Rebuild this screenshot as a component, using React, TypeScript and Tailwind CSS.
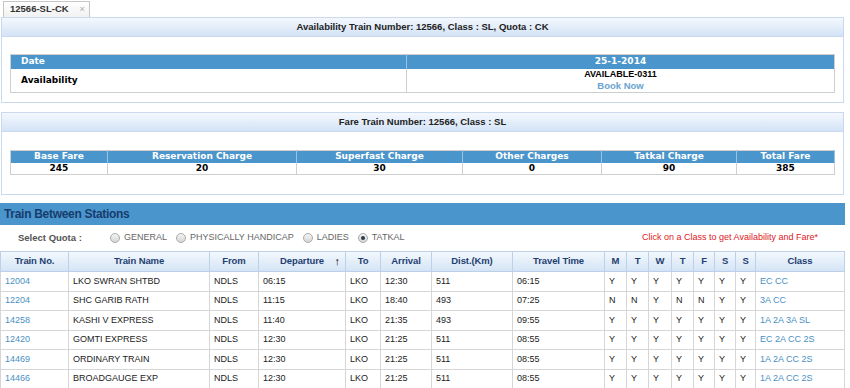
import React from 'react';

const trains = [
  { no: '12004', name: 'LKO SWRAN SHTBD', from: 'NDLS', dep: '06:15', to: 'LKO', arr: '12:30', dist: '511', time: '06:15', days: 'YYYYYYY', cls: 'EC CC' },
  { no: '12204', name: 'SHC GARIB RATH', from: 'NDLS', dep: '11:15', to: 'LKO', arr: '18:40', dist: '493', time: '07:25', days: 'NNYNNYY', cls: '3A CC' },
  { no: '14258', name: 'KASHI V EXPRESS', from: 'NDLS', dep: '11:40', to: 'LKO', arr: '21:35', dist: '493', time: '09:55', days: 'YYYYYYY', cls: '1A 2A 3A SL' },
  { no: '12420', name: 'GOMTI EXPRESS', from: 'NDLS', dep: '12:30', to: 'LKO', arr: '21:25', dist: '511', time: '08:55', days: 'YYYYYYY', cls: 'EC 2A CC 2S' },
  { no: '14469', name: 'ORDINARY TRAIN', from: 'NDLS', dep: '12:30', to: 'LKO', arr: '21:25', dist: '511', time: '08:55', days: 'YYYYYYY', cls: '1A 2A CC 2S' },
  { no: '14466', name: 'BROADGAUGE EXP', from: 'NDLS', dep: '12:30', to: 'LKO', arr: '21:25', dist: '511', time: '08:55', days: 'YYYYYYY', cls: '1A 2A CC 2S' },
];

const fares = [
  { label: 'Base Fare', value: '245', w: 'w-[97px]' },
  { label: 'Reservation Charge', value: '20', w: 'w-[189px]' },
  { label: 'Superfast Charge', value: '30', w: 'w-[166px]' },
  { label: 'Other Charges', value: '0', w: 'w-[139px]' },
  { label: 'Tatkal Charge', value: '90', w: 'w-[135px]' },
  { label: 'Total Fare', value: '385', w: '' },
];

const quotas = ['GENERAL', 'PHYSICALLY HANDICAP', 'LADIES', 'TATKAL'];

function Radio({ checked }: { checked?: boolean }) {
  return (
    <span className="w-[10px] h-[10px] rounded-full border border-[#a9a9a9] bg-gradient-to-b from-[#f4f4f4] to-[#d6d6d6] flex items-center justify-center">
      {checked && <span className="w-[4px] h-[4px] rounded-full bg-[#2b3b4b]" />}
    </span>
  );
}

function PanelHeader({ children }: { children: React.ReactNode }) {
  return (
    <div className="h-[19px] bg-gradient-to-b from-[#f4f8fd] to-[#d3e3f6] border-b border-[#c9daef] flex items-center justify-center text-[9.5px] font-bold text-[#222]">
      {children}
    </div>
  );
}

export default function App() {
  const th = 'border border-[#bcd1e9] text-center font-bold text-[9.5px] text-[#1f4070] tracking-[-0.1px]';
  const td = 'border border-[#d6d6d6] pl-[4px] text-[9px] whitespace-nowrap';
  const dark = 'text-[#222]';
  const link = 'text-[#4a8fc3]';
  const verdana = "font-['DejaVu_Sans',Verdana,sans-serif]";

  return (
    <div className="w-[850px] h-[388px] overflow-hidden bg-white font-['Liberation_Sans',Arial,sans-serif]">
      {/* tab strip */}
      <div className="h-[17px] pl-[3px] flex items-end">
        <div className="h-[16px] w-[87px] border border-b-0 border-[#c6c6c6] bg-gradient-to-b from-[#ffffff] to-[#f1f1f1] flex items-center pl-[6px] gap-[11px]">
          <span className="text-[9.5px] font-bold text-[#333]">12566-SL-CK</span>
          <span className="text-[9px] text-[#aaa] leading-none">×</span>
        </div>
      </div>

      {/* availability panel */}
      <div className="ml-[1px] w-[843px] border border-[#c9daef] bg-white">
        <PanelHeader>Availability Train Number: 12566, Class : SL, Quota : CK</PanelHeader>
        <div className="pt-[17px] pb-[9px] pl-[8px]">
          <table className="w-[825px] table-fixed border-collapse border border-[#cfcfcf]">
            <colgroup>
              <col className="w-[396px]" />
              <col />
            </colgroup>
            <tbody>
              <tr className="h-[13px] bg-[#4a96cc] text-white font-bold">
                <td className={`pl-[10px] text-[9px] ${verdana} border-r border-[#9cc2e2]`}>Date</td>
                <td className={`text-center text-[9px] ${verdana}`}>25-1-2014</td>
              </tr>
              <tr className="h-[24px]">
                <td className={`pl-[10px] text-[9px] font-bold text-black ${verdana} border-r border-[#cfcfcf]`}>Availability</td>
                <td className="text-center leading-[11px]">
                  <div className="text-[9px] font-bold text-black">AVAILABLE-0311</div>
                  <div className="text-[9.5px] font-bold text-[#6aa3cf]">Book Now</div>
                </td>
              </tr>
            </tbody>
          </table>
        </div>
      </div>

      {/* fare panel */}
      <div className="mt-[9px] ml-[1px] w-[843px] border border-[#c9daef] bg-white">
        <PanelHeader>Fare Train Number: 12566, Class : SL</PanelHeader>
        <div className="pt-[18px] pb-[19px] pl-[8px]">
          <table className={`w-[825px] table-fixed border-collapse border border-[#cfcfcf] ${verdana}`}>
            <colgroup>
              {fares.map((f) => (
                <col key={f.label} className={f.w} />
              ))}
            </colgroup>
            <tbody>
              <tr className="h-[12px] bg-[#4a96cc]">
                {fares.map((f) => (
                  <td key={f.label} className="text-center text-[9px] leading-[11px] font-bold text-white border-r border-[#9cc2e2]">
                    {f.label}
                  </td>
                ))}
              </tr>
              <tr className="h-[12px]">
                {fares.map((f) => (
                  <td key={f.label} className="text-center text-[9px] leading-[11px] font-bold text-black border-r border-[#cfcfcf]">
                    {f.value}
                  </td>
                ))}
              </tr>
            </tbody>
          </table>
        </div>
      </div>

      {/* train between stations */}
      <div className="mt-[8px] w-[845px] h-[22px] bg-[#4a96cc] flex items-center pl-[4px]">
        <span className="text-[12px] font-bold text-[#173c6e] tracking-[-0.3px]">Train Between Stations</span>
      </div>

      <div className="w-[845px] h-[26px] flex items-center">
        <span className="ml-[18px] w-[92px] text-[9.5px] font-bold text-[#555]">Select Quota :</span>
        <div className="flex items-center gap-[9px]">
          {quotas.map((q) => (
            <label key={q} className="flex items-center gap-[4px] text-[9px] text-[#666]">
              <Radio checked={q === 'TATKAL'} />
              {q}
            </label>
          ))}
        </div>
        <span className="ml-auto mr-[27px] text-[9px] text-[#e0201e]">Click on a Class to get Availability and Fare*</span>
      </div>

      <table className="w-[845px] table-fixed border-collapse">
        <colgroup>
          <col className="w-[68px]" />
          <col className="w-[141px]" />
          <col className="w-[49px]" />
          <col className="w-[87px]" />
          <col className="w-[35px]" />
          <col className="w-[51px]" />
          <col className="w-[81px]" />
          <col className="w-[92px]" />
          <col className="w-[22px]" />
          <col className="w-[22px]" />
          <col className="w-[23px]" />
          <col className="w-[22px]" />
          <col className="w-[21px]" />
          <col className="w-[21px]" />
          <col className="w-[20px]" />
          <col />
        </colgroup>
        <thead>
          <tr className="h-[20px] bg-gradient-to-b from-[#f3f8fd] to-[#d3e3f5]">
            <th className={th}>Train No.</th>
            <th className={th}>Train Name</th>
            <th className={th}>From</th>
            <th className={th}>
              <div className="flex items-center justify-center relative">
                Departure
                <span className="absolute right-[5px] text-[11px] text-black font-normal leading-none">↑</span>
              </div>
            </th>
            <th className={th}>To</th>
            <th className={th}>Arrival</th>
            <th className={th}>Dist.(Km)</th>
            <th className={th}>Travel Time</th>
            <th className={th}>M</th>
            <th className={th}>T</th>
            <th className={th}>W</th>
            <th className={th}>T</th>
            <th className={th}>F</th>
            <th className={th}>S</th>
            <th className={th}>S</th>
            <th className={th}>Class</th>
          </tr>
        </thead>
        <tbody>
          {trains.map((t) => (
            <tr key={t.no} className="h-[19.5px]">
              <td className={`${td} ${link}`}>{t.no}</td>
              <td className={`${td} ${dark}`}>{t.name}</td>
              <td className={`${td} ${dark}`}>{t.from}</td>
              <td className={`${td} ${dark}`}>{t.dep}</td>
              <td className={`${td} ${dark}`}>{t.to}</td>
              <td className={`${td} ${dark}`}>{t.arr}</td>
              <td className={`${td} ${dark}`}>{t.dist}</td>
              <td className={`${td} ${dark}`}>{t.time}</td>
              {t.days.split('').map((d, i) => (
                <td key={i} className={`${td} ${dark}`}>{d}</td>
              ))}
              <td className={`${td} ${link}`}>{t.cls}</td>
            </tr>
          ))}
        </tbody>
      </table>
    </div>
  );
}
